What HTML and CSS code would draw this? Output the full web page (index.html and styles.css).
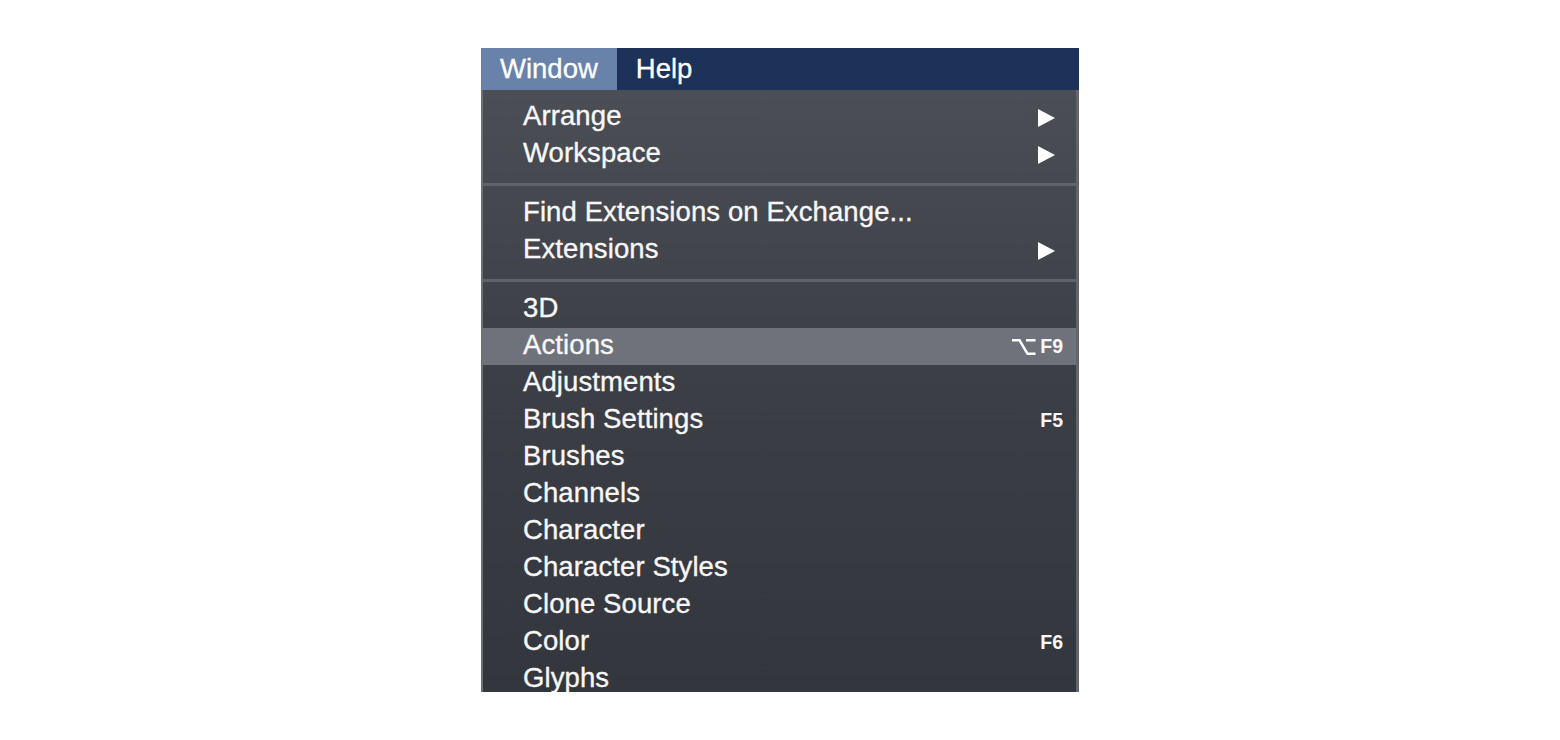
FILE: index.html
```html
<!DOCTYPE html>
<html lang="en">
<head>
<meta charset="utf-8">
<title>Window menu</title>
<link rel="stylesheet" href="styles.css">
</head>
<body>
<div class="menu">
  <div class="menubar">
    <span class="bar-item active">Window</span>
    <span class="bar-item">Help</span>
  </div>
  <div class="dropdown">
    <div class="row"><span class="label">Arrange</span><svg class="arrow" width="17" height="18" viewBox="0 0 17 18"><path d="M0 0 L17 9 L0 18 Z" fill="#fff"/></svg></div>
    <div class="row"><span class="label">Workspace</span><svg class="arrow" width="17" height="18" viewBox="0 0 17 18"><path d="M0 0 L17 9 L0 18 Z" fill="#fff"/></svg></div>
    <div class="sep"></div>
    <div class="row"><span class="label">Find Extensions on Exchange...</span></div>
    <div class="row"><span class="label">Extensions</span><svg class="arrow" width="17" height="18" viewBox="0 0 17 18"><path d="M0 0 L17 9 L0 18 Z" fill="#fff"/></svg></div>
    <div class="sep"></div>
    <div class="row"><span class="label">3D</span></div>
    <div class="row selected"><span class="label">Actions</span><span class="shortcut"><svg class="opt" width="24" height="18" viewBox="0 0 24 18"><path d="M0 2.2 H7.5 L15.5 15.8 H23.5 M14 2.2 H23.5" fill="none" stroke="#fff" stroke-width="2.6"/></svg>F9</span></div>
    <div class="row"><span class="label">Adjustments</span></div>
    <div class="row"><span class="label">Brush Settings</span><span class="shortcut">F5</span></div>
    <div class="row"><span class="label">Brushes</span></div>
    <div class="row"><span class="label">Channels</span></div>
    <div class="row"><span class="label">Character</span></div>
    <div class="row"><span class="label">Character Styles</span></div>
    <div class="row"><span class="label">Clone Source</span></div>
    <div class="row"><span class="label">Color</span><span class="shortcut">F6</span></div>
    <div class="row"><span class="label">Glyphs</span></div>
  </div>
</div>
</body>
</html>
```

FILE: styles.css
```css
html, body {
  margin: 0;
  padding: 0;
  background: #ffffff;
}

body {
  font-family: "Liberation Sans", Arial, sans-serif;
  color: #f7f7f8;
}

.menu {
  width: 598px;
  margin: 48px 0 0 481px;
}

.menubar {
  display: flex;
  height: 42px;
  background: #1c3259;
}

.bar-item {
  padding: 0 19px;
  font-size: 27.5px;
  line-height: 42px;
  color: #ffffff;
  -webkit-text-stroke: 0.3px #ffffff;
}

.bar-item.active {
  background: #6882aa;
}

.dropdown {
  height: 602px;
  overflow: hidden;
  box-sizing: border-box;
  padding-top: 9px;
  background: linear-gradient(to bottom, #4b4e55 0%, #3c3f46 45%, #33363d 100%);
  border-left: 2px solid #6b6e74;
  border-right: 3px solid #62656b;
}

.row {
  display: flex;
  align-items: center;
  height: 37px;
  padding: 0 13px 0 40px;
}

.row.selected {
  background: #6f727a;
}

.label {
  flex: 1;
  align-self: flex-start;
  font-size: 27.5px;
  line-height: 33px;
  white-space: nowrap;
  letter-spacing: 0.1px;
  -webkit-text-stroke: 0.35px #f7f7f8;
}

.arrow {
  margin-right: 8px;
  display: block;
}

.shortcut {
  display: flex;
  align-items: center;
  gap: 4px;
  font-size: 19.5px;
  font-weight: bold;
}

.opt {
  display: block;
}

.sep {
  height: 22px;
  box-sizing: border-box;
  padding-top: 10px;
}

.sep::before {
  content: "";
  display: block;
  height: 3px;
  background: #5f6268;
}
```
